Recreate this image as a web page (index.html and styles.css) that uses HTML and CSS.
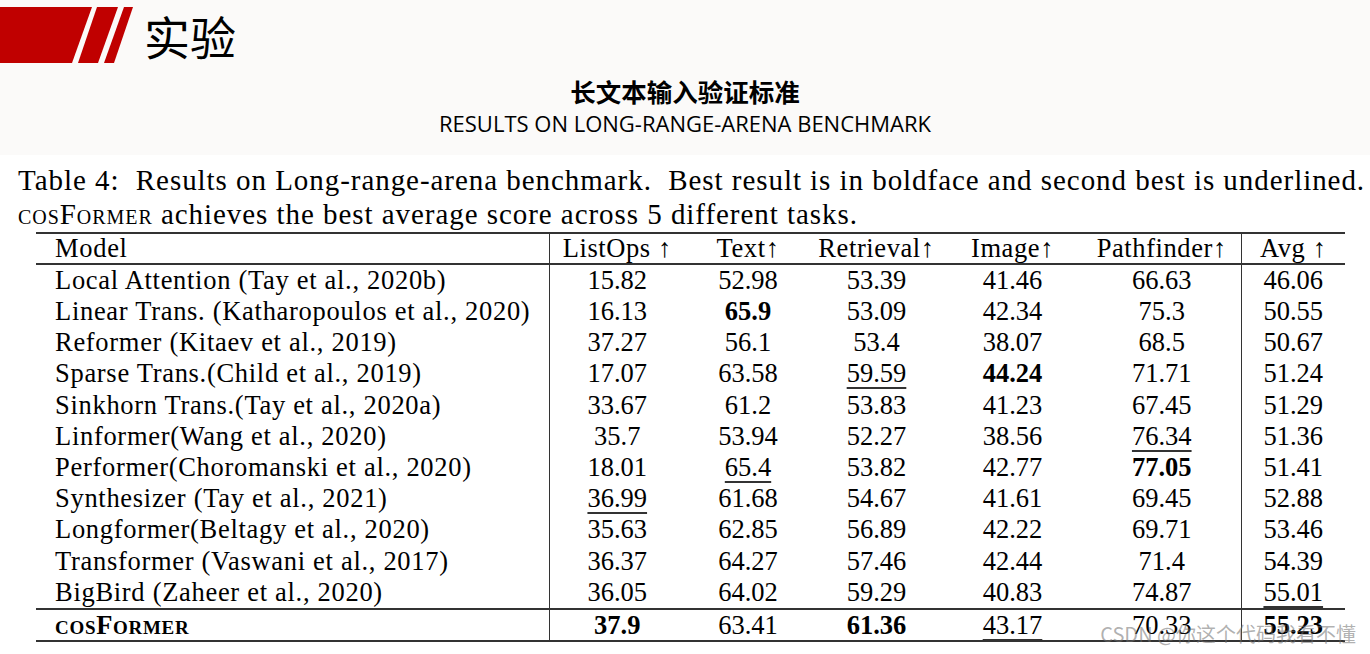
FILE: index.html
```html
<!DOCTYPE html>
<html lang="zh-CN">
<head>
  <meta charset="UTF-8">
  <title>实验</title>
  <meta name="viewport" content="width=device-width,initial-scale=1">
  <link rel="stylesheet" href="styles.css">
</head>
<body>

  <!-- 顶部标题栏 -->
  <header class="banner">
    <div class="title-row">
      <svg class="logo" width="133" height="56" viewBox="0 0 133 56">
        <polygon points="0,0 92,0 72,56 0,56" fill="#c00000"/>
        <polygon points="97,0 118,0 98,56 78,56" fill="#c00000"/>
        <polygon points="124,0 133,0 114,56 104,56" fill="#c00000"/>
      </svg>
      <h1>实验</h1>
    </div>
    <div class="subtitle">
      <div class="zh">长文本输入验证标准</div>
      <div class="en">RESULTS ON LONG-RANGE-ARENA BENCHMARK</div>
    </div>
  </header>

  <!-- 论文表格 -->
  <section class="paper">
    <p class="caption">
      Table 4:&nbsp; Results on Long-range-arena benchmark.&nbsp; Best result is in boldface and second best is underlined.<br>
      <span class="sc">cosFormer</span> achieves the best average score across 5 different tasks.
    </p>

    <table class="results">
      <colgroup>
        <col class="c-model">
        <col class="c-listops">
        <col class="c-text">
        <col class="c-retrieval">
        <col class="c-image">
        <col class="c-path">
        <col class="c-avg">
      </colgroup>
      <thead>
        <tr>
          <th class="model">Model</th>
          <th>ListOps ↑</th>
          <th>Text↑</th>
          <th>Retrieval↑</th>
          <th>Image↑</th>
          <th class="last">Pathfinder↑</th>
          <th>Avg ↑</th>
        </tr>
      </thead>
      <tbody>
        <tr><td class="model">Local Attention (Tay et al., 2020b)</td><td>15.82</td><td>52.98</td><td>53.39</td><td>41.46</td><td class="last">66.63</td><td>46.06</td></tr>
        <tr><td class="model">Linear Trans. (Katharopoulos et al., 2020)</td><td>16.13</td><td><b>65.9</b></td><td>53.09</td><td>42.34</td><td class="last">75.3</td><td>50.55</td></tr>
        <tr><td class="model">Reformer (Kitaev et al., 2019)</td><td>37.27</td><td>56.1</td><td>53.4</td><td>38.07</td><td class="last">68.5</td><td>50.67</td></tr>
        <tr><td class="model">Sparse Trans.(Child et al., 2019)</td><td>17.07</td><td>63.58</td><td><u>59.59</u></td><td><b>44.24</b></td><td class="last">71.71</td><td>51.24</td></tr>
        <tr><td class="model">Sinkhorn Trans.(Tay et al., 2020a)</td><td>33.67</td><td>61.2</td><td>53.83</td><td>41.23</td><td class="last">67.45</td><td>51.29</td></tr>
        <tr><td class="model">Linformer(Wang et al., 2020)</td><td>35.7</td><td>53.94</td><td>52.27</td><td>38.56</td><td class="last"><u>76.34</u></td><td>51.36</td></tr>
        <tr><td class="model">Performer(Choromanski et al., 2020)</td><td>18.01</td><td><u>65.4</u></td><td>53.82</td><td>42.77</td><td class="last"><b>77.05</b></td><td>51.41</td></tr>
        <tr><td class="model">Synthesizer (Tay et al., 2021)</td><td><u>36.99</u></td><td>61.68</td><td>54.67</td><td>41.61</td><td class="last">69.45</td><td>52.88</td></tr>
        <tr><td class="model">Longformer(Beltagy et al., 2020)</td><td>35.63</td><td>62.85</td><td>56.89</td><td>42.22</td><td class="last">69.71</td><td>53.46</td></tr>
        <tr><td class="model">Transformer (Vaswani et al., 2017)</td><td>36.37</td><td>64.27</td><td>57.46</td><td>42.44</td><td class="last">71.4</td><td>54.39</td></tr>
        <tr><td class="model">BigBird (Zaheer et al., 2020)</td><td>36.05</td><td>64.02</td><td>59.29</td><td>40.83</td><td class="last">74.87</td><td><u>55.01</u></td></tr>
      </tbody>
      <tfoot>
        <tr><td class="model"><b class="sc">cosFormer</b></td><td><b>37.9</b></td><td>63.41</td><td><b>61.36</b></td><td><u>43.17</u></td><td class="last">70.33</td><td><b>55.23</b></td></tr>
      </tfoot>
    </table>

    <span class="watermark">CSDN @你这个代码我看不懂</span>
  </section>

</body>
</html>
```

FILE: styles.css
```css
* { box-sizing: border-box; }
body {
  margin: 0;
  background: #fff;
  color: #000;
  font-family: "Liberation Serif", "Times New Roman", serif;
}

/* -------- 顶部标题栏 -------- */
.banner {
  height: 155px;
  background: #fbfaf9;
  padding-top: 7px;
}
.title-row {
  display: flex;
  align-items: center;
  height: 56px;
}
.logo { display: block; }
.title-row h1 {
  margin: 0 0 0 11px;
  font-family: "Noto Sans CJK SC", sans-serif;
  font-weight: 400;
  font-size: 46px;
  line-height: 1;
}
.subtitle {
  text-align: center;
  margin-top: 13px;
}
.subtitle .zh {
  font-family: "Noto Sans CJK SC", sans-serif;
  font-weight: 700;
  font-size: 25.5px;
  line-height: 30px;
}
.subtitle .en {
  font-family: "Open Sans", "Noto Sans", sans-serif;
  font-size: 22px;
  line-height: 28px;
  margin-top: 3px;
}

/* -------- 论文表格 -------- */
.paper {
  position: relative;
  height: 499px;
}
.caption {
  margin: 0;
  padding: 8px 0 0 18px;
  font-size: 29px;
  line-height: 34px;
  letter-spacing: 0.95px;
  white-space: nowrap;
}
.sc { font-variant: small-caps; }

.results {
  margin: 1px 0 0 36px;
  width: 1309px;
  table-layout: fixed;
  border-collapse: collapse;
  font-size: 26.5px;
  border-top: 2px solid #333;
  border-bottom: 2px solid #333;
}
.c-model { width: 513px; }
.c-listops { width: 136px; }
.c-text { width: 126px; }
.c-retrieval { width: 131px; }
.c-image { width: 141px; }
.c-path { width: 158px; }
.c-avg { width: 104px; }

.results th,
.results td {
  padding: 0;
  text-align: center;
  font-weight: 400;
  white-space: nowrap;
}
.results th {
  height: 31px;
  line-height: 29px;
  letter-spacing: 0.6px;
}
.results tbody td { height: 31.2px; line-height: 31px; }
.results tfoot td { height: 31px; line-height: 29px; padding-top: 1px; }
.results thead tr { border-bottom: 2px solid #333; }
.results tfoot tr { border-top: 2px solid #333; }
.results .model {
  text-align: left;
  padding-left: 19px;
  letter-spacing: 0.7px;
  border-right: 1px solid #333;
}
.results .last { border-right: 1px solid #333; }
.results b { font-weight: 700; }
.results u {
  text-decoration-thickness: 2px;
  text-underline-offset: 5px;
  text-decoration-color: #333;
}

.watermark {
  position: absolute;
  right: 14px;
  bottom: 6px;
  font-family: "Noto Sans CJK SC", sans-serif;
  font-size: 20px;
  color: rgba(110, 110, 110, 0.55);
}
```
